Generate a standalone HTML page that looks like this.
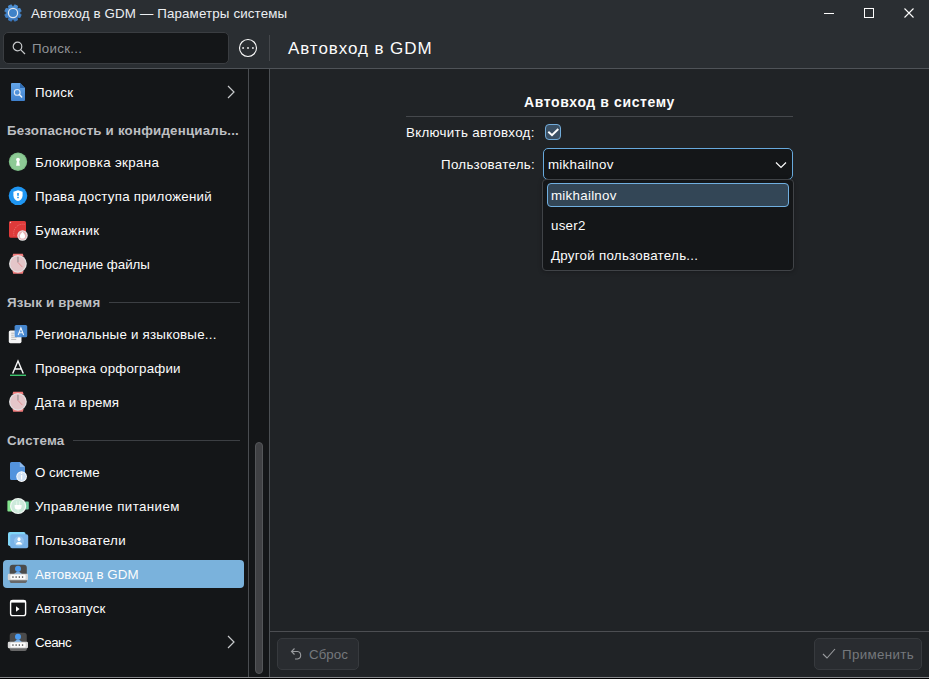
<!DOCTYPE html>
<html><head><meta charset="utf-8">
<style>
*{box-sizing:border-box;margin:0;padding:0}
html,body{width:929px;height:679px;overflow:hidden;background:#202326}
body{position:relative;font-family:"Liberation Sans",sans-serif;font-size:13.33px;color:#fcfcfc;letter-spacing:0.27px}
.a{position:absolute}
.t{position:absolute;white-space:nowrap;line-height:18px}
#hdr{left:0;top:0;width:929px;height:68px;background:#2a2e32}
#hline{left:0;top:68px;width:929px;height:1px;background:#4f5358}
#side{left:0;top:69px;width:248px;height:608px;background:#141618}
#sbtrack{left:249px;top:69px;width:20px;height:608px;background:#141618}
#vl1{left:248px;top:69px;width:1px;height:608px;background:#4a4d51}
#vl2{left:269px;top:69px;width:1px;height:608px;background:#4b4f53}
#bline{left:0;top:677px;width:929px;height:1px;background:#87888b}
#bdark{left:0;top:678px;width:929px;height:1px;background:#000}
#fline{left:270px;top:631px;width:659px;height:1px;background:#4c4e52}
.sec{font-weight:bold;color:#bdbfc2;letter-spacing:0.19px}
.sl{position:absolute;height:1px;background:#3c3f43;left:109px;width:131px}
.btn{position:absolute;border:1px solid #373a3e;border-radius:5px;background:#292c30}
</style></head><body>
<div id="hdr" class="a"></div>
<div id="hline" class="a"></div>
<div id="side" class="a"></div>
<div id="sbtrack" class="a"></div>
<div id="vl1" class="a"></div>
<div id="vl2" class="a"></div>
<div id="fline" class="a"></div>
<div id="bline" class="a"></div>
<div id="bdark" class="a"></div>

<!-- title bar -->
<svg class="a" style="left:4px;top:4px" width="18" height="18" viewBox="0 0 18 18">
<defs><linearGradient id="gg" x1="0" y1="0" x2="0" y2="1"><stop offset="0" stop-color="#4f93d8"/><stop offset="1" stop-color="#3a78c0"/></linearGradient></defs>
<path fill="url(#gg)" stroke="url(#gg)" stroke-width="0.8" stroke-linejoin="round" d="M9.63 2.43 L10.67 0.77 L13.64 2.00 L13.20 3.91 L14.09 4.80 L16.00 4.36 L17.23 7.33 L15.57 8.37 L15.57 9.63 L17.23 10.67 L16.00 13.64 L14.09 13.20 L13.20 14.09 L13.64 16.00 L10.67 17.23 L9.63 15.57 L8.37 15.57 L7.33 17.23 L4.36 16.00 L4.80 14.09 L3.91 13.20 L2.00 13.64 L0.77 10.67 L2.43 9.63 L2.43 8.37 L0.77 7.33 L2.00 4.36 L3.91 4.80 L4.80 3.91 L4.36 2.00 L7.33 0.77 L8.37 2.43Z"/>
<circle cx="9" cy="9" r="4.6" fill="#3f82c8" stroke="#e4e8ee" stroke-width="1.2"/>
</svg>
<div class="t" style="left:31px;top:5px;letter-spacing:0.14px;color:#eceff2">Автовход в GDM — Параметры системы</div>
<div class="a" style="left:824px;top:13px;width:10px;height:1px;background:#fcfcfc"></div>
<div class="a" style="left:864px;top:8px;width:10px;height:10px;border:1px solid #fcfcfc"></div>
<svg class="a" style="left:904px;top:8px" width="10" height="10" viewBox="0 0 10 10"><path d="M0.5 0.5L9.5 9.5M9.5 0.5L0.5 9.5" stroke="#fcfcfc" stroke-width="1.1"/></svg>

<!-- search -->
<div class="a" style="left:3px;top:32px;width:226px;height:32px;border:1px solid #3a3d41;border-radius:5px;background:#141618"></div>
<svg class="a" style="left:12px;top:41px" width="14" height="14" viewBox="0 0 14 14"><circle cx="5.5" cy="5.5" r="4.3" fill="none" stroke="#c8cacc" stroke-width="1.2"/><path d="M8.6 8.6L13 13" stroke="#c8cacc" stroke-width="1.2"/></svg>
<div class="t" style="left:32px;top:40px;color:#8f9296">Поиск...</div>
<svg class="a" style="left:238px;top:38px" width="20" height="20" viewBox="0 0 20 20"><circle cx="10" cy="10" r="8.5" fill="none" stroke="#fcfcfc" stroke-width="1.1"/><rect x="4.3" y="9.2" width="1.6" height="1.6" fill="#fcfcfc"/><rect x="9.2" y="9.2" width="1.6" height="1.6" fill="#fcfcfc"/><rect x="14.1" y="9.2" width="1.6" height="1.6" fill="#fcfcfc"/></svg>
<div class="a" style="left:269px;top:35px;width:1px;height:26px;background:#44474b"></div>
<div class="t" style="left:288px;top:39px;font-size:17px;line-height:20px;letter-spacing:0.93px">Автовход в GDM</div>

<!-- sidebar -->
<div class="t" style="left:35px;top:84px;letter-spacing:0.27px">Поиск</div>
<div class="t sec" style="left:7px;top:122px">Безопасность и конфиденциаль...</div>
<div class="t" style="left:35px;top:154px;letter-spacing:0.33px">Блокировка экрана</div>
<div class="t" style="left:35px;top:188px;letter-spacing:0.23px">Права доступа приложений</div>
<div class="t" style="left:35px;top:222px;letter-spacing:0.44px">Бумажник</div>
<div class="t" style="left:35px;top:256px;letter-spacing:-0.04px">Последние файлы</div>
<div class="t sec" style="left:7px;top:294px">Язык и время</div>
<div class="sl" style="top:302px"></div>
<div class="t" style="left:35px;top:326px;letter-spacing:0.23px">Региональные и языковые...</div>
<div class="t" style="left:35px;top:360px;letter-spacing:0.19px">Проверка орфографии</div>
<div class="t" style="left:35px;top:394px;letter-spacing:0.13px">Дата и время</div>
<div class="t sec" style="left:7px;top:432px">Система</div>
<div class="sl" style="top:440px;left:73px;width:167px"></div>
<div class="t" style="left:35px;top:464px;letter-spacing:-0.03px">О системе</div>
<div class="t" style="left:35px;top:498px;letter-spacing:0.4px">Управление питанием</div>
<div class="t" style="left:35px;top:532px;letter-spacing:0.33px">Пользователи</div>
<div class="a" style="left:3px;top:560px;width:241px;height:28px;border-radius:4px;background:#7ab2dc"></div>
<div class="t" style="left:35px;top:566px;letter-spacing:0.03px">Автовход в GDM</div>
<div class="t" style="left:35px;top:600px;letter-spacing:0.2px">Автозапуск</div>
<div class="t" style="left:35px;top:634px;letter-spacing:-0.45px">Сеанс</div>
<svg class="a" style="left:7px;top:81px" width="22" height="22" viewBox="0 0 22 22"><defs><linearGradient id="gs0" x1="0" y1="0" x2="0" y2="1"><stop offset="0" stop-color="#64a6ea"/><stop offset="1" stop-color="#3f80cc"/></linearGradient></defs>
<path d="M4 3a1 1 0 0 1 1-1h8l5 5v12a1 1 0 0 1-1 1H5a1 1 0 0 1-1-1z" fill="url(#gs0)"/><path d="M13 2v5h5z" fill="#2f6cb4"/>
<circle cx="10.2" cy="11.4" r="2.9" fill="none" stroke="#dfe9f6" stroke-width="1.1"/><path d="M12.3 13.5l2.4 2.4" stroke="#f4f8fc" stroke-width="1.4" stroke-linecap="round"/></svg>
<svg class="a" style="left:7px;top:151px" width="22" height="22" viewBox="0 0 22 22"><circle cx="11" cy="10.8" r="9.2" fill="#7fbf88"/><circle cx="11" cy="10.8" r="8" fill="#8dca95"/>
<circle cx="11" cy="8.6" r="1.9" fill="#fff"/><path d="M10 9.5h2l0.9 5.2h-3.8z" fill="#fff"/></svg>
<svg class="a" style="left:7px;top:185px" width="22" height="22" viewBox="0 0 22 22"><circle cx="11" cy="10.8" r="9.3" fill="#1f96f2"/>
<path d="M11 5.2l4.6 1.6v3.6c0 3-2.2 4.9-4.6 5.7-2.4-0.8-4.6-2.7-4.6-5.7V6.8z" fill="#fff"/>
<rect x="10.2" y="8" width="1.6" height="2.8" fill="#1f96f2"/><rect x="10.2" y="11.8" width="1.6" height="1.4" fill="#1f96f2"/></svg>
<svg class="a" style="left:7px;top:219px" width="22" height="22" viewBox="0 0 22 22"><rect x="2" y="2" width="17" height="16.7" rx="1.6" fill="#de3a3a"/>
<circle cx="3.5" cy="3.5" r="0.7" fill="#f5c0c0"/>
<path d="M7 16.5A9 9 0 0 1 18 5.5" fill="none" stroke="#f09090" stroke-width="0.8" stroke-dasharray="0.8 1.2"/>
<circle cx="15.5" cy="16.5" r="5.2" fill="#e6e6e6"/><circle cx="15.5" cy="16.5" r="4.2" fill="#e8b4b6"/>
<path d="M15.5 12.8c1.3 1.6 2.6 2.9 2.6 4.2a2.6 2.6 0 0 1-5.2 0c0-1.3 1.3-2.6 2.6-4.2z" fill="#fff"/></svg>
<svg class="a" style="left:7px;top:253px" width="22" height="22" viewBox="0 0 22 22"><path d="M5.4 3.6L6.2 0.8h9.6l0.9 2.8z" fill="#f27c7c"/><path d="M5.4 17.8l0.8 3h9.6l0.9-3z" fill="#f27c7c"/>
<circle cx="10.9" cy="10.8" r="8.9" fill="#e4e2e3"/><circle cx="10.9" cy="10.8" r="7.6" fill="#e4c6c9"/>
<rect x="10.3" y="3.8" width="1.3" height="5.6" fill="#a09496"/><path d="M11 9.5l4.4 4.6" stroke="#e07a7e" stroke-width="0.7"/></svg>
<svg class="a" style="left:7px;top:323px" width="22" height="22" viewBox="0 0 22 22"><rect x="1.8" y="7.4" width="12.7" height="12.8" rx="1.6" fill="#f4f4f4"/>
<path d="M4.2 10.2h3.2M4.2 12.2h2.6M4.2 14.2h5.5M4.2 16.4h5" stroke="#b0b0b0" stroke-width="0.9"/>
<rect x="7.6" y="1.9" width="12.6" height="12.4" rx="1.6" fill="#4a8fdc" fill-opacity="0.93"/>
<path d="M11.2 12L13.9 4.8l2.7 7.2M12.1 9.8h3.6" fill="none" stroke="#f0f6fc" stroke-width="1.1"/></svg>
<svg class="a" style="left:7px;top:357px" width="22" height="22" viewBox="0 0 22 22"><path d="M5.7 16.6L11 4l5.3 12.6M7.7 12h6.6" fill="none" stroke="#f8f8f8" stroke-width="1.4"/>
<rect x="3" y="17.6" width="16" height="1.4" fill="#3cc46c"/></svg>
<svg class="a" style="left:7px;top:391px" width="22" height="22" viewBox="0 0 22 22"><path d="M5.4 3.6L6.2 0.8h9.6l0.9 2.8z" fill="#f27c7c"/><path d="M5.4 17.8l0.8 3h9.6l0.9-3z" fill="#f27c7c"/>
<circle cx="10.9" cy="10.8" r="8.9" fill="#e4e2e3"/><circle cx="10.9" cy="10.8" r="7.6" fill="#e4c6c9"/>
<rect x="10.3" y="3.8" width="1.3" height="5.6" fill="#a09496"/><path d="M11 9.5l4.4 4.6" stroke="#e07a7e" stroke-width="0.7"/></svg>
<svg class="a" style="left:7px;top:461px" width="22" height="22" viewBox="0 0 22 22"><path d="M3 2.5a1.5 1.5 0 0 1 1.5-1.5H12.8L18 6v11.5a1.5 1.5 0 0 1-1.5 1.5H4.5A1.5 1.5 0 0 1 3 17.5z" fill="#5393dd"/><path d="M12.8 1v5H18z" fill="#8fb9ea"/>
<circle cx="14.6" cy="15.6" r="5.3" fill="#ffffff"/><circle cx="14.6" cy="15.6" r="4.4" fill="#cfe0f4"/>
<rect x="14" y="14" width="1.2" height="4.6" fill="#fff"/><circle cx="14.6" cy="12.3" r="0.7" fill="#fff"/></svg>
<svg class="a" style="left:7px;top:495px" width="22" height="22" viewBox="0 0 22 22"><path d="M0.4 6.2a0.8 0.8 0 0 1 0.8-0.8H6v11.2H1.2a0.8 0.8 0 0 1-0.8-0.8z" fill="#84e48e"/><path d="M16 6.5h5a0.8 0.8 0 0 1 0.8 0.8v6.4a0.8 0.8 0 0 1-0.8 0.8h-5z" fill="#6fcaa0"/>
<circle cx="11.1" cy="11" r="8.1" fill="#f4f8f5"/><circle cx="11.1" cy="11" r="6.9" fill="#cdeadb"/>
<path d="M7.6 10h7v1.2a3.5 3.5 0 0 1-7 0z" fill="#fff"/><path d="M9.6 6.2v3.8M12.6 6.2v3.8M11.1 14.5v2.2" stroke="#e2f4ea" stroke-width="1.1"/></svg>
<svg class="a" style="left:7px;top:529px" width="22" height="22" viewBox="0 0 22 22"><rect x="1" y="3" width="17.5" height="14" rx="1.8" fill="#80d6f8"/>
<rect x="3.2" y="5.2" width="18" height="14" rx="1.8" fill="#79b3e8"/>
<circle cx="12" cy="12.2" r="5" fill="#92c2ee"/>
<ellipse cx="12" cy="10.3" rx="1.5" ry="2" fill="#fff"/><path d="M8.8 15.5c0.6-1.8 1.8-2.4 3.2-2.4s2.6 0.6 3.2 2.4z" fill="#fff"/></svg>
<svg class="a" style="left:7px;top:563px" width="22" height="22" viewBox="0 0 22 22"><rect x="2.7" y="1.7" width="17.1" height="18.4" rx="3" fill="#4b4b4b"/>
<path d="M2.7 16h17.1v1.6a2.5 2.5 0 0 1-2.5 2.5H5.2a2.5 2.5 0 0 1-2.5-2.5z" fill="#686868"/>
<circle cx="11" cy="5.7" r="3" fill="#4a9bf0"/><path d="M10 8.4h2l3.2 2.8H6.8z" fill="#7ab0e6"/>
<rect x="0.8" y="10.8" width="20.2" height="6.4" rx="1.2" fill="#d8d8d8"/><rect x="3.4" y="11.8" width="15.2" height="4.4" rx="1" fill="#fcfcfc"/>
<rect x="5.3" y="13.4" width="1.3" height="1.3" fill="#3a3a3a"/><rect x="8.5" y="13.4" width="1.3" height="1.3" fill="#3a3a3a"/><rect x="11.7" y="13.4" width="1.3" height="1.3" fill="#3a3a3a"/><rect x="14.9" y="13.4" width="1.3" height="1.3" fill="#3a3a3a"/></svg>
<svg class="a" style="left:7px;top:597px" width="22" height="22" viewBox="0 0 22 22"><rect x="3.6" y="3.4" width="15" height="15.2" rx="2.2" fill="none" stroke="#fff" stroke-width="1.4"/>
<rect x="3.6" y="3.4" width="15" height="2.2" fill="#fff"/>
<path d="M9 9.3l3.6 2.7L9 14.7z" fill="#fff"/></svg>
<svg class="a" style="left:7px;top:631px" width="22" height="22" viewBox="0 0 22 22"><rect x="2.7" y="1.7" width="17.1" height="18.4" rx="3" fill="#4b4b4b"/>
<path d="M2.7 16h17.1v1.6a2.5 2.5 0 0 1-2.5 2.5H5.2a2.5 2.5 0 0 1-2.5-2.5z" fill="#686868"/>
<circle cx="11" cy="5.7" r="3" fill="#4a9bf0"/><path d="M10 8.4h2l3.2 2.8H6.8z" fill="#7ab0e6"/>
<rect x="0.8" y="10.8" width="20.2" height="6.4" rx="1.2" fill="#d8d8d8"/><rect x="3.4" y="11.8" width="15.2" height="4.4" rx="1" fill="#fcfcfc"/>
<rect x="5.3" y="13.4" width="1.3" height="1.3" fill="#3a3a3a"/><rect x="8.5" y="13.4" width="1.3" height="1.3" fill="#3a3a3a"/><rect x="11.7" y="13.4" width="1.3" height="1.3" fill="#3a3a3a"/><rect x="14.9" y="13.4" width="1.3" height="1.3" fill="#3a3a3a"/></svg>
<!-- chevrons -->
<svg class="a" style="left:226px;top:85px" width="10" height="14" viewBox="0 0 10 14"><path d="M2 1l6 6-6 6" fill="none" stroke="#c8cacc" stroke-width="1.2"/></svg>
<svg class="a" style="left:226px;top:635px" width="10" height="14" viewBox="0 0 10 14"><path d="M2 1l6 6-6 6" fill="none" stroke="#c8cacc" stroke-width="1.2"/></svg>
<!-- scrollbar -->
<div class="a" style="left:255px;top:442px;width:8px;height:232px;border-radius:4px;background:#404144;border:1px solid #545659"></div>

<!-- content -->
<div class="t" style="left:524px;top:93px;font-weight:bold;font-size:14px;letter-spacing:0.6px">Автовход в систему</div>
<div class="a" style="left:406px;top:116px;width:387px;height:1px;background:#45484c"></div>
<div class="t" style="left:406px;top:124px;letter-spacing:0.3px">Включить автовход:</div>
<div class="a" style="left:545px;top:124px;width:16px;height:16px;border:1px solid #72acda;border-radius:4px;background:#3b5064"></div>
<svg class="a" style="left:545px;top:124px" width="16" height="16" viewBox="0 0 16 16"><path d="M3.3 7.8L7 11.2L13.3 5" fill="none" stroke="#fcfcfc" stroke-width="2"/></svg>
<div class="t" style="left:441px;top:156px;letter-spacing:0.3px">Пользователь:</div>
<div class="a" style="left:543px;top:148px;width:250px;height:32px;border:1px solid #67a9dc;border-radius:5px;background:#141618"></div>
<div class="t" style="left:548px;top:156px">mikhailnov</div>
<svg class="a" style="left:775px;top:161px" width="12" height="8" viewBox="0 0 12 8"><path d="M1 1.5l5 5 5-5" fill="none" stroke="#fcfcfc" stroke-width="1.2"/></svg>

<!-- popup -->
<div class="a" style="left:542px;top:179px;width:252px;height:92px;border:1px solid #404347;border-radius:4px;background:#141618;box-shadow:0 1px 4px rgba(0,0,0,0.25)"></div>
<div class="a" style="left:547px;top:183px;width:242px;height:24px;border:1px solid #70afe0;border-radius:4px;background:#334656"></div>
<div class="t" style="left:551px;top:187px">mikhailnov</div>
<div class="t" style="left:551px;top:217px">user2</div>
<div class="t" style="left:551px;top:247px">Другой пользователь...</div>

<!-- footer -->
<div class="btn" style="left:277px;top:638px;width:82px;height:32px"></div>
<svg class="a" style="left:290px;top:646px" width="14" height="14" viewBox="0 0 14 14"><path d="M1.5 5.5h6a3.8 3.8 0 0 1 0 7.5H5M4.5 2.5l-3 3 3 3" fill="none" stroke="#9a9c9f" stroke-width="1.1"/></svg>
<div class="t" style="left:309px;top:646px;color:#75787c;letter-spacing:0.05px">Сброс</div>
<div class="btn" style="left:814px;top:638px;width:108px;height:32px"></div>
<svg class="a" style="left:822px;top:648px" width="14" height="12" viewBox="0 0 14 12"><path d="M1 6l4 4 8-9" fill="none" stroke="#9a9c9f" stroke-width="1.1"/></svg>
<div class="t" style="left:842px;top:646px;color:#75787c;letter-spacing:0.35px">Применить</div>
</body></html>
